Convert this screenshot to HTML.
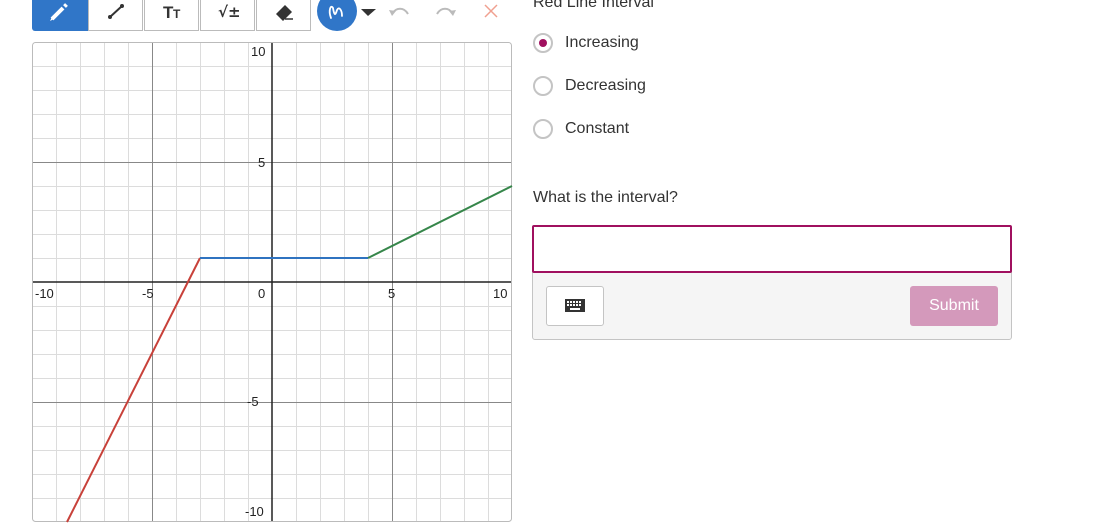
<!DOCTYPE html>
<html><head><meta charset="utf-8"><style>
body{margin:0;width:1107px;height:522px;overflow:hidden;background:#fff;font-family:"Liberation Sans",sans-serif;position:relative}
.a{position:absolute}
.btn{position:absolute;top:-2px;height:33px;width:55px;border:1px solid #bbb;border-top:none;background:#fff;box-sizing:border-box}
.t{font-size:16px;color:#333}
.r{position:absolute;left:533px;width:16px;height:16px;border:2px solid #c4c4c4;border-radius:50%}
</style></head><body>
<div class="btn" style="left:32px;width:57px;background:#3076c8;border-color:#3076c8;border-radius:0 0 0 3px"></div>
<svg class="a" style="left:32px;top:0" width="480" height="34">
<path d="M20 19 L31 8" stroke="#fff" stroke-width="4" stroke-linecap="butt"/><path d="M32.5 6.5 L34.5 4.5" stroke="#fff" stroke-width="4"/><path d="M18 21 L20 17 L22 19 Z" fill="#fff"/>
</svg>
<div class="btn" style="left:88px"></div>
<div class="btn" style="left:144px"></div>
<div class="btn" style="left:200px"></div>
<div class="btn" style="left:256px"></div>
<svg class="a" style="left:0;top:0" width="520" height="34">
<path d="M110 17 L122 6" stroke="#333" stroke-width="2"/><circle cx="110" cy="17" r="2" fill="#333"/><circle cx="122" cy="6" r="2" fill="#333"/>
<text x="163" y="18" font-size="17" font-weight="bold" fill="#333" font-family="Liberation Sans">T</text><text x="173" y="18" font-size="12" font-weight="bold" fill="#333" font-family="Liberation Sans">T</text>
<text x="218" y="17" font-size="15" font-weight="bold" fill="#333" font-family="DejaVu Sans">√±</text>
<path d="M276 14 L285 5 L292 12 L283 21 Z" fill="#333"/><path d="M285 19 H293" stroke="#333" stroke-width="1.5"/>
<circle cx="337" cy="11" r="20" fill="#3076c8"/>
<path d="M331 18 C328 10 331 4 333 8 C334 14 335 17 337 10 C339 6 342 10 342 16" stroke="#fff" stroke-width="1.8" fill="none" stroke-linecap="round"/>
<path d="M361 9 L376 9 L368 16 Z" fill="#333"/>
<path d="M392 14 C396 7 404 7 408 14" stroke="#bbb" stroke-width="2" fill="none"/><path d="M389 10 L392 16 L396 11" fill="#bbb"/>
<path d="M437 14 C441 7 449 7 453 14" stroke="#bbb" stroke-width="2" fill="none"/><path d="M456 10 L453 16 L449 11" fill="#bbb"/>
<path d="M485 5 L497 17 M497 5 L485 17" stroke="#f0a090" stroke-width="1.5"/>
</svg>
<svg class="a" style="left:32px;top:42px" width="481" height="481">
<g stroke="#dcdcdc" stroke-width="1">
<path d="M24.5 0V480M48.5 0V480M72.5 0V480M96.5 0V480M144.5 0V480M168.5 0V480M192.5 0V480M216.5 0V480M264.5 0V480M288.5 0V480M312.5 0V480M336.5 0V480M384.5 0V480M408.5 0V480M432.5 0V480M456.5 0V480"/>
<path d="M0 24.5H480M0 48.5H480M0 72.5H480M0 96.5H480M0 144.5H480M0 168.5H480M0 192.5H480M0 216.5H480M0 264.5H480M0 288.5H480M0 312.5H480M0 336.5H480M0 384.5H480M0 408.5H480M0 432.5H480M0 456.5H480"/>
</g>
<path d="M120.5 0V480M360.5 0V480M0 120.5H480M0 360.5H480" stroke="#888" stroke-width="1"/>
<path d="M240 0V480M0 240H480" stroke="#222" stroke-width="1.5"/>
<rect x="0.5" y="0.5" width="479" height="479" rx="3" fill="none" stroke="#bbb"/>
<g font-size="13" fill="#222" font-family="Liberation Sans">
<text x="219" y="14">10</text><text x="226" y="125">5</text><text x="215" y="364">-5</text><text x="213" y="474">-10</text>
<text x="3" y="256">-10</text><text x="110" y="256">-5</text><text x="226" y="256">0</text><text x="356" y="256">5</text><text x="461" y="256">10</text>
</g>
<path d="M35 480 L168 216" stroke="#c8413a" stroke-width="2" fill="none"/>
<path d="M168 216 L336 216" stroke="#2f73c0" stroke-width="2"/>
<path d="M336 216 L480 144" stroke="#36864a" stroke-width="2"/>
</svg>
<div class="a t" style="left:533px;top:-6px">Red Line Interval</div>
<div class="r" style="top:33px"><div class="a" style="left:4px;top:4px;width:8px;height:8px;border-radius:50%;background:#a0105f"></div></div>
<div class="a t" style="left:565px;top:34px">Increasing</div>
<div class="r" style="top:76px"></div>
<div class="a t" style="left:565px;top:77px">Decreasing</div>
<div class="r" style="top:119px"></div>
<div class="a t" style="left:565px;top:120px">Constant</div>
<div class="a t" style="left:533px;top:189px">What is the interval?</div>
<div class="a" style="left:532px;top:271px;width:478px;height:67px;background:#f5f5f5;border:1px solid #c4c4c4;border-radius:0 0 3px 3px"></div>
<div class="a" style="left:532px;top:225px;width:476px;height:44px;border:2px solid #a0105f;background:#fff;border-radius:2px"></div>
<div class="a" style="left:546px;top:286px;width:56px;height:38px;border:1px solid #c4c4c4;border-radius:3px;background:#fff"></div>
<svg class="a" style="left:565px;top:299px" width="20" height="13"><rect width="20" height="13" fill="#333"/><g fill="#fff"><rect x="2" y="2" width="2" height="2"/><rect x="5" y="2" width="2" height="2"/><rect x="8" y="2" width="2" height="2"/><rect x="11" y="2" width="2" height="2"/><rect x="14" y="2" width="2" height="2"/><rect x="2" y="5" width="2" height="2"/><rect x="5" y="5" width="2" height="2"/><rect x="8" y="5" width="2" height="2"/><rect x="11" y="5" width="2" height="2"/><rect x="14" y="5" width="2" height="2"/><rect x="5" y="9" width="10" height="2"/></g></svg>
<div class="a" style="left:910px;top:286px;width:88px;height:40px;background:#d499bb;border-radius:3px;color:#fff;font-size:16px;text-align:center;line-height:40px">Submit</div>
</body></html>
